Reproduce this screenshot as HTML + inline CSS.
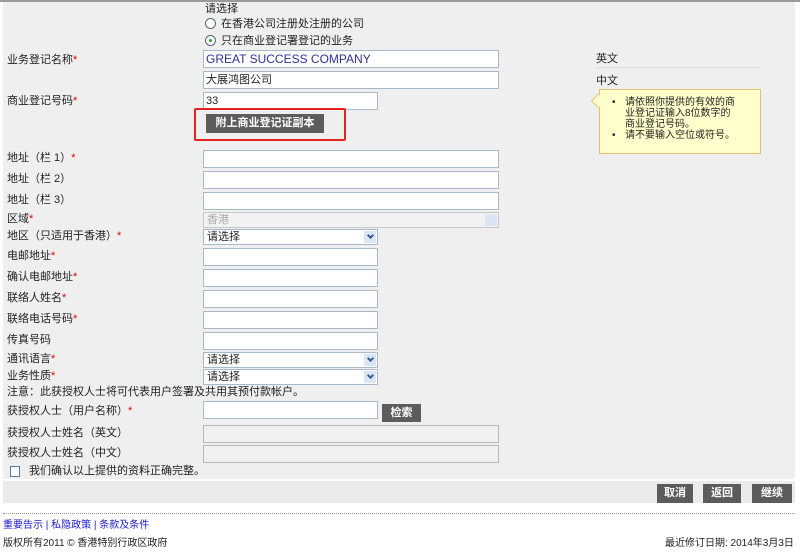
<!DOCTYPE html>
<html><head><meta charset="utf-8"><style>
*{margin:0;padding:0;box-sizing:border-box}
body{width:800px;height:554px;background:#fff;font-family:"Liberation Sans","Noto Sans CJK SC",sans-serif;font-size:11px;color:#222;position:relative;overflow:hidden}
.a{position:absolute;white-space:nowrap;line-height:14px}
.panel{position:absolute;left:3px;top:2px;width:792px;height:477px;background:#efefef}
.bar{position:absolute;left:3px;top:481px;width:792px;height:22px;background:#ebebeb}
.in{position:absolute;background:#fff;border:1px solid #a9b9cc;height:18px}
.dis{background:#f0f0f0;border-color:#b8b8b8}
.sel{position:absolute;background:#fff;border:1px solid #a9b9cc;height:16px;font-size:11px;line-height:14px;padding-left:3px}
.sel:after{content:"";position:absolute;right:1px;top:1px;width:12px;height:12px;background:#dbe6f5}
.sel i{position:absolute;right:4px;top:3px;width:5px;height:5px;border-right:2px solid #3a5a9a;border-bottom:2px solid #3a5a9a;transform:rotate(45deg);z-index:2}
.btn{position:absolute;background:#5c5c5c;color:#fff;font-weight:bold;text-align:center;font-size:11px}
.r{color:#d00}
</style></head><body>
<div style="position:absolute;left:0;top:0;width:800px;height:2px;background:#999"></div>
<div class="panel"></div>
<div class="bar"></div>
<div class="a" style="left:205px;top:2px">请选择</div>
<div style="position:absolute;left:205px;top:18px;width:11px;height:11px;border:1px solid #567;border-radius:50%;background:#fff"></div>
<div class="a" style="left:221px;top:17px">在香港公司注册处注册的公司</div>
<div style="position:absolute;left:205px;top:35px;width:11px;height:11px;border:1px solid #567;border-radius:50%;background:#fff"><div style="position:absolute;left:3px;top:3px;width:3px;height:3px;background:#2a2;border-radius:50%"></div></div>
<div class="a" style="left:221px;top:34px">只在商业登记署登记的业务</div>

<div class="a" style="left:7px;top:53px">业务登记名称<span class="r">*</span></div>
<div class="in" style="left:203px;top:50px;width:296px;padding-left:2px;line-height:16px;color:#30309a;font-size:12px">GREAT SUCCESS COMPANY</div>
<div class="in" style="left:203px;top:71px;width:296px;padding-left:2px;line-height:16px">大展鸿图公司</div>
<div class="a" style="left:7px;top:94px">商业登记号码<span class="r">*</span></div>
<div class="in" style="left:203px;top:92px;width:175px;padding-left:2px;line-height:16px">33</div>
<div style="position:absolute;left:194px;top:108px;width:152px;height:33px;border:2px solid #e82020;border-radius:2px"></div>
<div class="btn" style="left:206px;top:114px;width:118px;height:19px;line-height:19px">附上商业登记证副本</div>

<div class="a" style="left:7px;top:151px">地址（栏 1）<span class="r">*</span></div>
<div class="in" style="left:203px;top:150px;width:296px"></div>
<div class="a" style="left:7px;top:172px">地址（栏 2）</div>
<div class="in" style="left:203px;top:171px;width:296px"></div>
<div class="a" style="left:7px;top:193px">地址（栏 3）</div>
<div class="in" style="left:203px;top:192px;width:296px"></div>
<div class="a" style="left:7px;top:212px">区域<span class="r">*</span></div>
<div class="sel" style="left:203px;top:212px;width:296px;background:#f2f2f2;border-color:#c8c8c8;color:#aaa">香港</div>
<div class="a" style="left:7px;top:229px">地区（只适用于香港）<span class="r">*</span></div>
<div class="sel" style="left:203px;top:229px;width:175px">请选择<i></i></div>
<div class="a" style="left:7px;top:249px">电邮地址<span class="r">*</span></div>
<div class="in" style="left:203px;top:248px;width:175px"></div>
<div class="a" style="left:7px;top:270px">确认电邮地址<span class="r">*</span></div>
<div class="in" style="left:203px;top:269px;width:175px"></div>
<div class="a" style="left:7px;top:291px">联络人姓名<span class="r">*</span></div>
<div class="in" style="left:203px;top:290px;width:175px"></div>
<div class="a" style="left:7px;top:312px">联络电话号码<span class="r">*</span></div>
<div class="in" style="left:203px;top:311px;width:175px"></div>
<div class="a" style="left:7px;top:333px">传真号码</div>
<div class="in" style="left:203px;top:332px;width:175px"></div>
<div class="a" style="left:7px;top:352px">通讯语言<span class="r">*</span></div>
<div class="sel" style="left:203px;top:352px;width:175px">请选择<i></i></div>
<div class="a" style="left:7px;top:369px">业务性质<span class="r">*</span></div>
<div class="sel" style="left:203px;top:369px;width:175px">请选择<i></i></div>
<div class="a" style="left:7px;top:385px">注意：此获授权人士将可代表用户签署及共用其预付款帐户。</div>
<div class="a" style="left:7px;top:404px">获授权人士（用户名称）<span class="r">*</span></div>
<div class="in" style="left:203px;top:401px;width:175px"></div>
<div class="btn" style="left:382px;top:404px;width:39px;height:18px;line-height:18px">检索</div>
<div class="a" style="left:7px;top:426px">获授权人士姓名（英文）</div>
<div class="in dis" style="left:203px;top:425px;width:296px"></div>
<div class="a" style="left:7px;top:446px">获授权人士姓名（中文）</div>
<div class="in dis" style="left:203px;top:445px;width:296px"></div>
<div style="position:absolute;left:10px;top:466px;width:10px;height:11px;border:1px solid #5a7aa0;background:#fff"></div>
<div class="a" style="left:29px;top:464px">我们确认以上提供的资料正确完整。</div>

<div class="a" style="left:596px;top:52px">英文</div>
<div style="position:absolute;left:596px;top:67px;width:164px;height:1px;background:#ddd"></div>
<div class="a" style="left:596px;top:74px">中文</div>
<div style="position:absolute;left:599px;top:89px;width:162px;height:65px;background:#ffffcc;border:1px solid #e6c070"></div>
<div style="position:absolute;left:593px;top:96px;width:10px;height:10px;background:#ffffcc;border-left:1px solid #e6c070;border-bottom:1px solid #e6c070;transform:rotate(45deg)"></div>
<div class="a" style="left:612px;top:97px;font-size:10px;line-height:11px;white-space:normal;width:128px">
<div style="position:relative;padding-left:13px"><span style="position:absolute;left:0">•</span>请依照你提供的有效的商业登记证输入8位数字的商业登记号码。</div>
<div style="position:relative;padding-left:13px"><span style="position:absolute;left:0">•</span>请不要输入空位或符号。</div></div>

<div class="btn" style="left:657px;top:484px;width:36px;height:19px;line-height:19px">取消</div>
<div class="btn" style="left:703px;top:484px;width:38px;height:19px;line-height:19px">返回</div>
<div class="btn" style="left:752px;top:484px;width:40px;height:19px;line-height:19px">继续</div>

<div style="position:absolute;left:3px;top:513px;width:792px;border-top:1px dotted #999"></div>
<div class="a" style="left:3px;top:519px;color:#1a1ad0;font-size:10px">重要告示 | 私隐政策 | 条款及条件</div>
<div class="a" style="left:3px;top:537px;font-size:10px">版权所有2011 © 香港特别行政区政府</div>
<div class="a" style="left:665px;top:537px;font-size:10px">最近修订日期: 2014年3月3日</div>
</body></html>
